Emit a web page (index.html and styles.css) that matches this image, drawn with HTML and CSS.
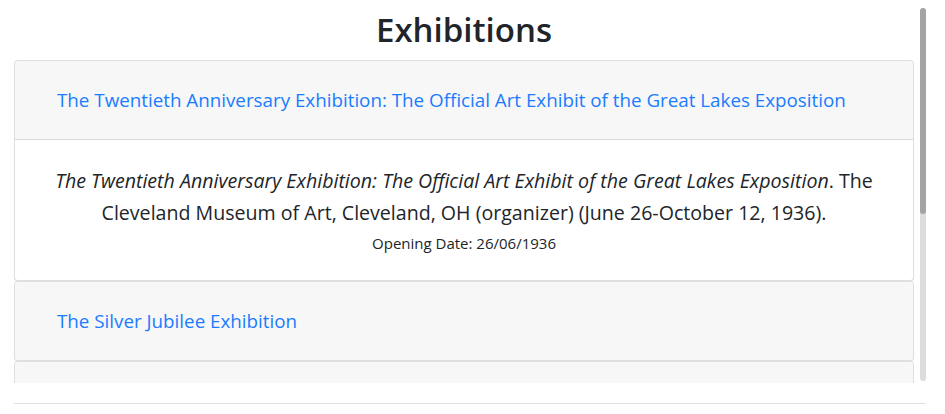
FILE: index.html
```html
<!DOCTYPE html>
<html lang="en">
<head>
<meta charset="utf-8">
<title>Exhibitions</title>
<link rel="stylesheet" href="styles.css">
</head>
<body>
<div class="page">
  <div class="viewport">
    <div class="scroller">
      <h2 class="title">Exhibitions</h2>
      <div class="accordion">
        <div class="card">
          <div class="card-header"><a class="toggle" href="#">The Twentieth Anniversary Exhibition: The Official Art Exhibit of the Great Lakes Exposition</a></div>
          <div class="card-body">
            <p class="citation"><em>The Twentieth Anniversary Exhibition: The Official Art Exhibit of the Great Lakes Exposition</em>. The Cleveland Museum of Art, Cleveland, OH (organizer) (June 26-October 12, 1936).</p>
            <p class="date">Opening Date: 26/06/1936</p>
          </div>
        </div>
        <div class="card">
          <div class="card-header"><a class="toggle" href="#">The Silver Jubilee Exhibition</a></div>
        </div>
        <div class="card">
          <div class="card-header"></div>
        </div>
      </div>
    </div>
    <div class="scrollbar"><div class="thumb"></div></div>
  </div>
  <hr class="rule">
</div>
</body>
</html>
```
FILE: styles.css
```css
html, body {
  margin: 0;
  padding: 0;
  background: #fff;
}
body {
  font-family: "Open Sans", "Noto Sans", sans-serif;
  color: #212529;
}
.viewport {
  position: relative;
  height: 383px;
  overflow: hidden;
}
.scroller {
  padding: 0 31px 0 14px;
}
.scrollbar {
  position: absolute;
  left: 920px;
  top: 8px;
  width: 6px;
  height: 373px;
  border-radius: 3px;
  background: #dcdcdc;
}
.thumb {
  height: 206px;
  border-radius: 3px;
  background: #a4a4a4;
}
.title {
  margin: 0;
  padding: 9px 0 10px;
  text-align: center;
  font-size: 33px;
  font-weight: 600;
  line-height: 41px;
}
.card {
  border: 1px solid rgba(0,0,0,.125);
  border-radius: 4px;
  background: #fff;
  box-shadow: 0 1px 1px rgba(0,0,0,.08);
}
.card-header {
  background: #f7f7f7;
  height: 78px;
  display: flex;
  align-items: center;
  padding: 0 42px;
  border-radius: 4px 4px 0 0;
}
.card:not(:first-child) .card-header {
  border-radius: 4px;
}
.card:first-child .card-header {
  border-bottom: 1px solid rgba(0,0,0,.125);
}
.toggle {
  color: #1a7cff;
  text-decoration: none;
  font-size: 18.8px;
}
.card-body {
  padding: 25px 20px 27px;
  text-align: center;
}
.citation {
  margin: 0 auto;
  font-size: 19.6px;
  line-height: 32px;
  max-width: 840px;
}
.date {
  margin: 4px 0 0;
  font-size: 15px;
}
.rule {
  margin: 20px 19px 0 14px;
  border: 0;
  border-top: 1px solid #e0e0e0;
}
```
